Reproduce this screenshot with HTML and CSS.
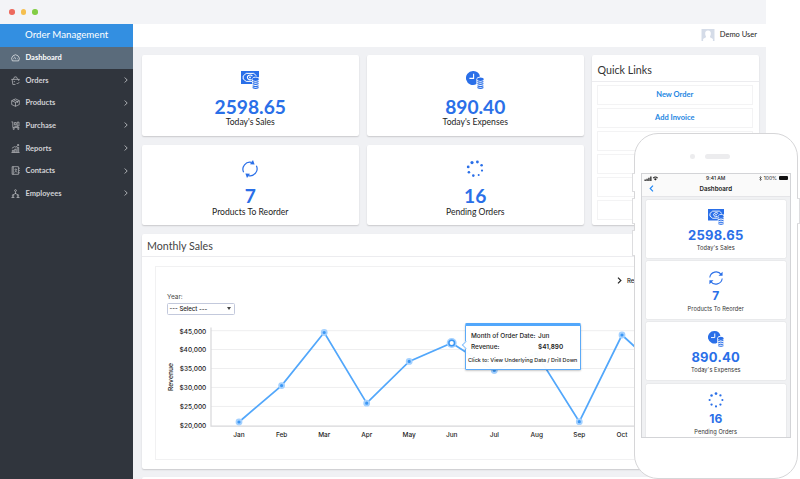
FILE: index.html
```html
<!DOCTYPE html>
<html lang="en">
<head>
    <meta charset="UTF-8">
    <meta name="viewport" content="width=device-width, initial-scale=1.0">
    <title>Order Management</title>
    <link rel="stylesheet" href="styles.css">
</head>
<body>
    <!-- Shared icons -->
    <svg class="sprite">
        <symbol id="sales" viewBox="0 0 18 18">
            <path fill="currentColor" d="M0 0h18v6.2h-1.4A4 4 0 0 0 11 8v5H0z"/>
            <path fill="none" stroke="#fff" stroke-width="1" d="M11 10.4H5.2L2.2 8V5L5.2 2.4h7.6L15.6 5"/>
            <path fill="none" stroke="#fff" stroke-width="1.1" d="M11.4 5A2.8 2.3 0 1 0 10.6 8.400"/>
            <circle cx="9" cy="6.4" r=".9" fill="#fff"/>
            <ellipse cx="14.6" cy="8.3" rx="3.2" ry="1.7" fill="currentColor"/>
            <path fill="none" stroke="currentColor" stroke-width="1.1" d="M11.6 10.5q3 1.6 6 0M11.6 12.6q3 1.6 6 0M11.6 14.7q3 1.6 6 0M11.6 16.6q3 1.6 6 0"/>
        </symbol>
        <symbol id="expenses" viewBox="0 0 18 18">
            <path fill="currentColor" d="M7 0a7 7 0 1 0 3.4 13.1V8q.5-2.4 3.6-2.6A7 7 0 0 0 7 0z"/>
            <path fill="none" stroke="#fff" stroke-width="1.1" d="M7.6 2.8v4.6H3.4"/>
            <ellipse cx="14.4" cy="8.3" rx="3.3" ry="1.7" fill="currentColor"/>
            <path fill="none" stroke="currentColor" stroke-width="1.1" d="M11.4 10.5q3 1.6 6 0M11.4 12.6q3 1.6 6 0M11.4 14.7q3 1.6 6 0M11.4 16.6q3 1.6 6 0"/>
        </symbol>
        <symbol id="reorder" viewBox="0 0 18 18">
            <path fill="none" stroke="currentColor" stroke-width="1.2" d="M2.6 12.2A7 7 0 0 1 10.6 2.4M15.4 5.8A7 7 0 0 1 7.4 15.6"/>
            <path fill="currentColor" d="M12 0l1.6 4.6-4.6-.4zM6 18l-1.6-4.6 4.6.4z"/>
        </symbol>
        <symbol id="pending" viewBox="0 0 18 18">
            <g fill="currentColor">
                <circle cx="6" cy="2.6" r="1.6"/><circle cx="11.4" cy="2" r="1.4"/>
                <circle cx="15.6" cy="5.3" r="1.3"/><circle cx="16" cy="10.6" r="1.1"/>
                <circle cx="12.7" cy="14.9" r="1"/><circle cx="7.3" cy="15.6" r="1.3"/>
                <circle cx="2.9" cy="12.2" r="1.3"/><circle cx="2.2" cy="6.9" r="1.4"/>
            </g>
        </symbol>
        <symbol id="sync" viewBox="0 0 18 18">
            <path fill="none" stroke="currentColor" stroke-width="1.2" d="M2 8.4A7.2 7.2 0 0 1 15 5.2M16 9.6A7.2 7.2 0 0 1 3 12.8"/>
            <path fill="currentColor" d="M16.4 2v4.6h-4.6zM1.6 16v-4.6h4.6z"/>
        </symbol>
        <symbol id="dots" viewBox="0 0 18 18">
            <g fill="currentColor">
                <circle cx="9" cy="1.8" r="1.5"/><circle cx="14" cy="3.9" r="1.3"/>
                <circle cx="16.2" cy="9" r="1.2"/><circle cx="14" cy="14.1" r="1.3"/>
                <circle cx="9" cy="16.2" r="1.2"/><circle cx="4" cy="14.1" r="1.3"/>
                <circle cx="1.8" cy="9" r="1.2"/><circle cx="4" cy="3.9" r="1.4"/>
            </g>
        </symbol>
        <symbol id="chevron" viewBox="0 0 4 6">
            <path fill="none" stroke="currentColor" stroke-width=".8" d="M.7.5 3.2 3 .7 5.5"/>
        </symbol>
    </svg>

    <div class="stage">
        <!-- Desktop window -->
        <div class="window">
            <div class="titlebar">
                <span class="light red"></span>
                <span class="light yellow"></span>
                <span class="light green"></span>
            </div>

            <div class="app">
                <nav class="sidebar">
                    <div class="brand">Order Management</div>
                    <div class="item active">
                        <svg class="item-icon" viewBox="0 0 8 8"><path d="M1.2 7A3.4 3.4 0 1 1 6.8 7zM3 3.3l1.2 2.2M2 5h.6M5.5 5H6"/></svg>
                        <span>Dashboard</span>
                    </div>
                    <div class="item">
                        <svg class="item-icon" viewBox="0 0 8 8"><path d="M.3 3h7.4M1 3l.6 4.5H4M7 3l-.2 1.4M2 3 3.2.8h1.6L6 3M2.4 5h1.2M5 6.2l.8.9 1.6-1.7"/></svg>
                        <span>Orders</span>
                        <svg class="chev"><use href="#chevron"/></svg>
                    </div>
                    <div class="item">
                        <svg class="item-icon" viewBox="0 0 8 8"><path d="M4 .8 7.4 2.4v3.4L4 7.4.6 5.8V2.4zM.6 2.4 4 4l3.4-1.6M4 4v3.4M2.3 1.6l3.4 1.6v1.2"/></svg>
                        <span>Products</span>
                        <svg class="chev"><use href="#chevron"/></svg>
                    </div>
                    <div class="item">
                        <svg class="item-icon" viewBox="0 0 8 8"><path d="M.4.8h1.2v5h5.8M3 1.4h1.6v2H3zM5.5 1h1.6v3.5H5.5zM3 4.8h3"/><circle cx="2.4" cy="7" r=".6"/><circle cx="6.5" cy="7" r=".6"/></svg>
                        <span>Purchase</span>
                        <svg class="chev"><use href="#chevron"/></svg>
                    </div>
                    <div class="item">
                        <svg class="item-icon" viewBox="0 0 8 8"><path d="M.4 7.6h7.2M1.2 7.4V5.6h1.2v1.8M3.3 7.4V4.6h1.2v2.8M5.5 7.4V3h1.3v4.4M.8 3.8 3 2.4l1.4.4L6.8.6M5.4.6h1.4v1.2"/></svg>
                        <span>Reports</span>
                        <svg class="chev"><use href="#chevron"/></svg>
                    </div>
                    <div class="item">
                        <svg class="item-icon" viewBox="0 0 8 8"><path d="M1 .6h5.6v6.8H1zM2 .6v6.8M3 5.6q1.3-1.6 2.6 0M7.4 1.5v1M7.4 3.5v1M7.4 5.5v1"/><circle cx="4.3" cy="3.2" r=".7"/></svg>
                        <span>Contacts</span>
                        <svg class="chev"><use href="#chevron"/></svg>
                    </div>
                    <div class="item">
                        <svg class="item-icon" viewBox="0 0 8 8"><path d="M4 2.5v2M4 4 2 5M4 4l2 1M.6 7.5q1.1-1.6 2.3 0zM5.1 7.5q1.1-1.6 2.3 0z"/><circle cx="4" cy="1.4" r=".8"/><circle cx="1.8" cy="5.6" r=".6"/><circle cx="6.2" cy="5.6" r=".6"/></svg>
                        <span>Employees</span>
                        <svg class="chev"><use href="#chevron"/></svg>
                    </div>
                </nav>

                <div class="main">
                    <div class="topbar">
                        <svg class="avatar" viewBox="0 0 13 12"><path fill="#d5dce8" d="M0 0h13v12H0z"/><path fill="#fff" d="M6.5 1.4c2.2 0 3 1.5 2.8 3.5-.1 1.5-.8 2.3-.9 3 .4.9 2.3 1 3 2.2V12H1.6v-1.9c.7-1.2 2.6-1.3 3-2.2-.1-.7-.8-1.5-.9-3-.2-2 .6-3.5 2.8-3.5z"/></svg>
                        <span class="user">Demo User</span>
                    </div>

                    <div class="content">
                        <div class="stats">
                            <div class="card stat">
                                <svg class="stat-icon"><use href="#sales"/></svg>
                                <div class="value">2598.65</div>
                                <div class="label">Today's Sales</div>
                            </div>
                            <div class="card stat">
                                <svg class="stat-icon"><use href="#expenses"/></svg>
                                <div class="value">890.40</div>
                                <div class="label">Today's Expenses</div>
                            </div>
                            <div class="card links">
                                <h2 class="links-title">Quick Links</h2>
                                <div class="link-list">
                                    <div class="link">New Order</div>
                                    <div class="link">Add Invoice</div>
                                    <div class="link"></div>
                                    <div class="link"></div>
                                    <div class="link"></div>
                                    <div class="link"></div>
                                </div>
                            </div>
                            <div class="card stat">
                                <svg class="stat-icon"><use href="#reorder"/></svg>
                                <div class="value">7</div>
                                <div class="label">Products To Reorder</div>
                            </div>
                            <div class="card stat">
                                <svg class="stat-icon"><use href="#pending"/></svg>
                                <div class="value">16</div>
                                <div class="label">Pending Orders</div>
                            </div>
                        </div>

                        <div class="card sales">
                            <h2 class="sales-title">Monthly Sales</h2>
                            <div class="report">
                                <div class="legend">
                                    <svg class="legend-arrow" viewBox="0 0 4 6"><path d="M.7.5 3.2 3 .7 5.5"/></svg>
                                    <span>Revenue</span>
                                </div>
                                <div class="filter">Year:</div>
                                <div class="select"><span>--- Select ---</span><i class="caret"></i></div>
                                <svg class="chart" viewBox="156 320 590 124">
                                    <g class="grid">
                                        <path d="M211 330.7H745M211 349.5H745M211 368.5H745M211 387.4H745M211 406.4H745"/>
                                    </g>
                                    <path class="axis" d="M211 327.5V426.2H745"/>
                                    <g class="ylabels">
                                        <text x="206.3" y="333.6">$45,000</text>
                                        <text x="206.3" y="352.4">$40,000</text>
                                        <text x="206.3" y="371.2">$35,000</text>
                                        <text x="206.3" y="390">$30,000</text>
                                        <text x="206.3" y="408.9">$25,000</text>
                                        <text x="206.3" y="427.7">$20,000</text>
                                    </g>
                                    <text class="ytitle" transform="translate(172.7 377) rotate(-90)">Revenue</text>
                                    <g class="xlabels">
                                        <text x="239" y="436.8">Jan</text>
                                        <text x="281.6" y="436.8">Feb</text>
                                        <text x="324.2" y="436.8">Mar</text>
                                        <text x="366.7" y="436.8">Apr</text>
                                        <text x="409.2" y="436.8">May</text>
                                        <text x="451.7" y="436.8">Jun</text>
                                        <text x="494.3" y="436.8">Jul</text>
                                        <text x="536.8" y="436.8">Aug</text>
                                        <text x="579.3" y="436.8">Sep</text>
                                        <text x="622" y="436.8">Oct</text>
                                    </g>
                                    <polyline class="series" points="239,422 281.6,385.6 324.2,332.5 366.7,403.2 409.2,361.4 451.7,343 494.3,370.5 536.8,354 579.3,421.7 622,335 664.5,374"/>
                                    <g class="points">
                                        <circle cx="239" cy="422" r="2.5"/>
                                        <circle cx="281.6" cy="385.6" r="2.5"/>
                                        <circle cx="324.2" cy="332.5" r="2.5"/>
                                        <circle cx="366.7" cy="403.2" r="2.5"/>
                                        <circle cx="409.2" cy="361.4" r="2.5"/>
                                        <circle cx="494.3" cy="370.5" r="2.5"/>
                                        <circle cx="536.8" cy="354" r="2.5"/>
                                        <circle cx="579.3" cy="421.7" r="2.5"/>
                                        <circle cx="622" cy="335" r="2.5"/>
                                    </g>
                                    <circle class="halo" cx="451.7" cy="343" r="5"/>
                                    <circle class="current" cx="451.7" cy="343" r="2.8"/>
                                </svg>
                                <!-- Tooltip over June -->
                                <div class="tooltip">
                                    <div class="tip-row"><span>Month of Order Date:</span><span>Jun</span></div>
                                    <div class="tip-row"><span>Revenue:</span><b>$41,890</b></div>
                                    <div class="tip-action">Click to: View Underlying Data / Drill Down</div>
                                </div>
                            </div>
                        </div>
                        <div class="card next"></div>
                    </div>
                </div>
            </div>
        </div>

        <!-- Phone -->
        <div class="phone">
            <span class="button b1"></span>
            <span class="button b2"></span>
            <span class="button b3"></span>
            <span class="button power"></span>
            <div class="earpiece">
                <span class="camera"></span>
                <span class="speaker"></span>
            </div>
            <div class="screen">
                <div class="status">
                    <svg class="signal" viewBox="0 0 14 5"><path d="M0 3.5h1.3V5H0zM1.9 2.8h1.3V5H1.9zM3.8 1.7h1.3V5H3.8zM5.7.6H7V5H5.7z"/><path d="M8.3 1.7a4 4 0 0 1 5.2 0l-.6.7a3.2 3.2 0 0 0-4 0zM9.4 2.9a2.3 2.3 0 0 1 3 0L10.9 4.6z"/></svg>
                    <span>9:41 AM</span>
                    <div class="power-info">
                        <svg class="bluetooth" viewBox="0 0 3 5"><path d="M.4 1.4 2.5 3.5 1.5 4.6V.4l1 1.1L.4 3.6"/></svg>
                        <span>100%</span>
                        <i class="battery"></i>
                    </div>
                </div>
                <div class="phone-nav">
                    <svg class="back" viewBox="0 0 5 8"><path d="M4.2.8 1 4l3.2 3.2"/></svg>
                    <span>Dashboard</span>
                </div>
                <div class="phone-cards">
                    <div class="phone-card">
                        <svg class="phone-icon"><use href="#sales"/></svg>
                        <div class="phone-value">2598.65</div>
                        <div class="phone-label">Today's Sales</div>
                    </div>
                    <div class="phone-card">
                        <svg class="phone-icon"><use href="#sync"/></svg>
                        <div class="phone-value small">7</div>
                        <div class="phone-label">Products To Reorder</div>
                    </div>
                    <div class="phone-card">
                        <svg class="phone-icon"><use href="#expenses"/></svg>
                        <div class="phone-value">890.40</div>
                        <div class="phone-label">Today's Expenses</div>
                    </div>
                    <div class="phone-card">
                        <svg class="phone-icon"><use href="#dots"/></svg>
                        <div class="phone-value small">16</div>
                        <div class="phone-label">Pending Orders</div>
                    </div>
                </div>
            </div>
        </div>
    </div>
</body>
</html>
```
FILE: styles.css
```css
* {
    margin: 0;
    padding: 0;
    box-sizing: border-box;
}

body {
    height: 100vh;
    overflow: hidden;
    background: #fff;
    font-family: Lato, sans-serif;
    color: #333;
}

.sprite {
    display: none;
}

.stage {
    position: relative;
    width: 800px;
    height: 479px;
    overflow: hidden;
}

/* Desktop window */
.window {
    display: flex;
    flex-direction: column;
    width: 766px;
    height: 479px;
    overflow: hidden;
}

.titlebar {
    display: flex;
    align-items: center;
    gap: 6px;
    flex: none;
    height: 24px;
    padding-left: 9px;
    background: #f3f4f7;
}

.light {
    width: 5.5px;
    height: 5.5px;
    border-radius: 50%;
}

.red { background: #ed6a5e; }
.yellow { background: #f5bf4f; }
.green { background: #83cd45; }

.app {
    display: flex;
    flex: 1;
    min-height: 0;
}

/* Sidebar */
.sidebar {
    flex: none;
    width: 133px;
    background: #30353d;
}

.brand {
    height: 23px;
    padding-left: 25px;
    background: #338fe1;
    color: #fff;
    font-size: 9.7px;
    line-height: 21px;
}

.item {
    display: flex;
    align-items: center;
    height: 22.6px;
    padding: 0 5px 0 11px;
    color: #d0d2d5;
    font-size: 7.5px;
    font-weight: 700;
}

.item.active {
    height: 22px;
    padding-bottom: 1px;
    background: #5a6b7b;
    color: #fff;
}

.item-icon {
    width: 9px;
    height: 9px;
    margin-right: 5.5px;
    fill: none;
    stroke: currentColor;
    stroke-width: .55;
}

.chev {
    width: 4px;
    height: 6px;
    margin-left: auto;
}

/* Main area */
.main {
    display: flex;
    flex-direction: column;
    flex: 1;
    min-width: 0;
    background: #f0f1f4;
}

.topbar {
    display: flex;
    align-items: center;
    justify-content: flex-end;
    gap: 5px;
    flex: none;
    height: 23px;
    padding-right: 9px;
    background: #fff;
}

.avatar {
    width: 14px;
    height: 12px;
    margin-top: -2px;
}

.user {
    margin-top: -1px;
    color: #222;
    font-size: 7.5px;
    line-height: 8px;
}

.content {
    display: flex;
    flex-direction: column;
    gap: 8.5px;
    padding: 8px 7.5px 0 9px;
}

.card {
    background: #fff;
    border-radius: 2px;
    box-shadow: 0 1px 1.5px rgba(0, 0, 0, .16);
}

/* Stats */
.stats {
    display: grid;
    grid-template-columns: 216.5px 216.5px 1fr;
    grid-template-rows: 80.5px 80.5px;
    gap: 9px 8.5px;
}

.stat {
    display: flex;
    flex-direction: column;
    align-items: center;
    padding-top: 15.5px;
}

.stat-icon {
    flex: none;
    width: 18px;
    height: 18px;
    color: #2a6fe8;
}

.value {
    margin-top: 6px;
    color: #2a6fe8;
    font-size: 19.2px;
    font-weight: 700;
    line-height: 24px;
}

.label {
    margin-top: -1.4px;
    color: #222;
    font-size: 8.6px;
    line-height: 10px;
}

.links {
    grid-column: 3;
    grid-row: 1 / 3;
}

.links-title {
    height: 26.5px;
    padding: 3px 0 0 5.5px;
    border-bottom: 1px solid #ececef;
    font-size: 10.7px;
    font-weight: 400;
    line-height: 23px;
}

.link-list {
    display: grid;
    gap: 3px;
    padding: 3px 6px 0 5px;
}

.link {
    height: 20px;
    border: 1px solid #f3f3f4;
    color: #2486e2;
    font-size: 7.5px;
    font-weight: 700;
    line-height: 18px;
    text-align: center;
}

/* Monthly sales */
.sales {
    height: 235.5px;
}

.sales-title {
    height: 23.5px;
    padding-left: 5px;
    border-bottom: 1px solid #ececef;
    color: #444;
    font-size: 10.7px;
    font-weight: 400;
    line-height: 23px;
}

.report {
    position: relative;
    height: 194px;
    margin: 8.5px 10px 0 13px;
    border: 1px solid #f1f1f2;
    font-family: Inter, sans-serif;
}

.legend {
    display: flex;
    align-items: center;
    gap: 5px;
    height: 8px;
    margin: 9.5px 0 0 461px;
    color: #222;
    font-size: 6px;
    font-weight: 500;
}

.legend-arrow {
    width: 5px;
    height: 7px;
    fill: none;
    stroke: #222;
    stroke-width: 1;
}

.filter {
    margin: 9px 0 0 11px;
    color: #444;
    font-size: 6.5px;
    line-height: 9px;
}

.select {
    display: flex;
    align-items: center;
    justify-content: space-between;
    width: 68.5px;
    height: 12.5px;
    margin: .5px 0 0 10.5px;
    padding: 0 3px 0 2px;
    border: 1px solid #c3c9dc;
    border-radius: 1.5px;
    color: #222;
    font-size: 6px;
    font-weight: 500;
}

.caret {
    border: 2px solid transparent;
    border-top: 3px solid #444;
    border-bottom: 0;
}

.chart {
    display: block;
    width: 590px;
    height: 124px;
    margin-top: 4.5px;
}

.grid {
    stroke: #eeeeef;
    stroke-width: 1;
}

.axis {
    fill: none;
    stroke: #d8d8da;
    stroke-width: 1.2;
}

.ylabels,
.xlabels,
.ytitle {
    fill: #1c1c1c;
    font-size: 6.5px;
    font-weight: 500;
}

.ylabels {
    text-anchor: end;
}

.xlabels,
.ytitle {
    text-anchor: middle;
}

.ytitle {
    font-size: 6.8px;
}

.series {
    fill: none;
    stroke: #52a7fb;
    stroke-width: 1.7;
}

.points {
    fill: #3c97f4;
    stroke: #a4d1ff;
    stroke-width: 1.8;
}

.halo {
    fill: #a4d1ff;
}

.current {
    fill: #fff;
    stroke: #3c97f4;
    stroke-width: 1.5;
}

.tooltip {
    position: absolute;
    left: 309px;
    top: 56px;
    width: 116px;
    height: 47.5px;
    padding-top: 5.5px;
    background: rgba(255, 255, 255, .97);
    border: 1px solid #5caaf7;
    border-top: 3px solid #52a7fb;
    border-radius: 1.5px;
    box-shadow: 0 1px 2px rgba(0, 0, 0, .22);
    color: #1c1c1c;
    font-weight: 500;
    white-space: nowrap;
}

.tooltip::before {
    content: '';
    position: absolute;
    left: -3px;
    top: 16px;
    width: 5px;
    height: 5px;
    background: #fff;
    border: 1px solid #8cc4fc;
    border-width: 0 0 1px 1px;
    transform: rotate(45deg);
}

.tip-row {
    display: grid;
    grid-template-columns: 67px 1fr;
    padding-left: 5px;
    font-size: 6.4px;
    line-height: 11.2px;
}

.tip-row b {
    font-weight: 600;
}

.tip-action {
    padding: 2.5px 0 0 2px;
    font-size: 5.4px;
    line-height: 9px;
}

.next {
    height: 20px;
    margin-top: -.5px;
}

/* Phone */
.phone {
    position: absolute;
    left: 634px;
    top: 133px;
    width: 163.5px;
    height: 346px;
    padding: 0 7px;
    background: #fff;
    border: 1px solid #d6d6d8;
    border-radius: 24px;
}

.button {
    position: absolute;
    left: -3px;
    width: 3px;
    background: #fff;
    border: 1px solid #dddddf;
    border-right: 0;
    border-radius: 1px 0 0 1px;
}

.b1 { top: 39px; height: 19px; }
.b2 { top: 64px; height: 26px; }
.b3 { top: 96px; height: 26px; }

.power {
    left: auto;
    right: -3px;
    top: 64px;
    height: 26px;
    border: 1px solid #dddddf;
    border-left: 0;
}

.earpiece {
    display: flex;
    align-items: center;
    gap: 10px;
    height: 39px;
    padding: 6px 0 0 48px;
}

.camera {
    width: 4.5px;
    height: 4.5px;
    border-radius: 50%;
    background: #ececee;
}

.speaker {
    width: 25px;
    height: 5.5px;
    border-radius: 3px;
    background: #ececee;
}

.screen {
    width: 149.5px;
    height: 265px;
    margin-left: -1px;
    overflow: hidden;
    border: 1px solid #d3d4d7;
    background: #f0f1f3;
    font-family: Inter, sans-serif;
}

.status {
    display: grid;
    grid-template-columns: 1fr auto 1fr;
    align-items: center;
    height: 8.5px;
    padding: 0 2px;
    background: #fafafa;
    color: #222;
    font-size: 5px;
    font-weight: 500;
}

.signal {
    width: 15px;
    height: 5px;
    fill: #222;
}

.power-info {
    display: flex;
    align-items: center;
    justify-content: flex-end;
    gap: 1.5px;
    font-weight: 400;
}

.bluetooth {
    width: 3px;
    height: 5px;
    fill: none;
    stroke: #222;
    stroke-width: .5;
}

.battery {
    width: 9px;
    height: 4px;
    border-radius: 1px;
    background: #111;
}

.phone-nav {
    position: relative;
    height: 14px;
    background: #fafafa;
    border-bottom: 1px solid #e5e5e8;
    color: #222;
    font-size: 6.2px;
    font-weight: 600;
    line-height: 12px;
    text-align: center;
}

.back {
    position: absolute;
    left: 7px;
    top: 2px;
    width: 5px;
    height: 7px;
    fill: none;
    stroke: #1f86f5;
    stroke-width: 1.3;
}

.phone-cards {
    display: flex;
    flex-direction: column;
    gap: 3.5px;
    padding: 3.5px 3.5px 0;
}

.phone-card {
    display: flex;
    flex-direction: column;
    align-items: center;
    flex: none;
    height: 57.7px;
    padding-top: 8.5px;
    background: #fff;
    border-radius: 1.5px;
    box-shadow: 0 0 1.5px rgba(0, 0, 0, .14);
}

.phone-icon {
    width: 16px;
    height: 16px;
    color: #2a6fe8;
}

.phone-value {
    margin-top: 2.5px;
    color: #2a6fe8;
    font-size: 13px;
    font-weight: 700;
    letter-spacing: .25px;
    line-height: 16px;
}

.phone-value.small {
    font-size: 12px;
    letter-spacing: 0;
}

.phone-label {
    font-size: 5.7px;
    line-height: 9px;
    letter-spacing: .06px;
}
```
